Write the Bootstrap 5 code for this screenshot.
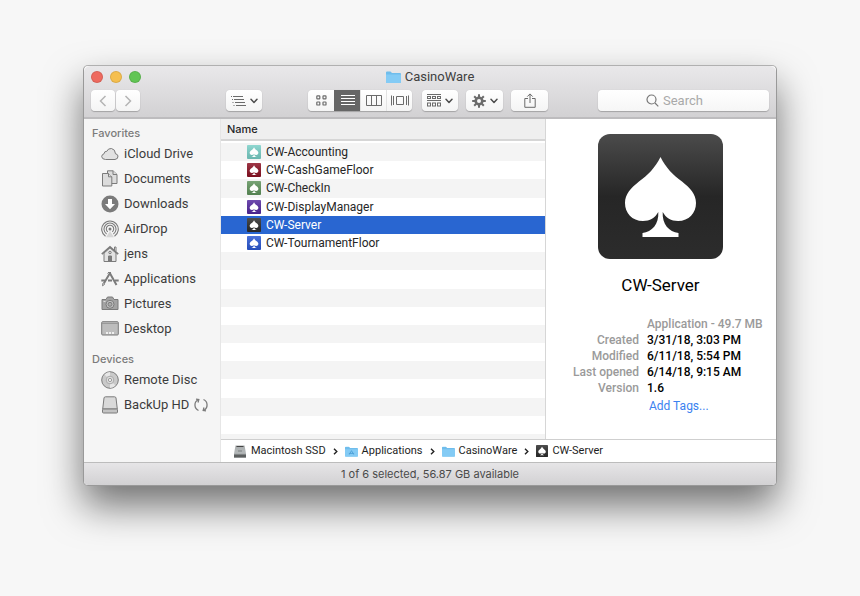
<!DOCTYPE html>
<html lang="en">
<head>
<meta charset="utf-8">
<meta name="viewport" content="width=device-width, initial-scale=1">
<title>CasinoWare</title>
<link href="https://cdn.jsdelivr.net/npm/bootstrap@5.3.0/dist/css/bootstrap.min.css" rel="stylesheet">
<style>
  body { font-family: Roboto, "Liberation Sans", sans-serif; font-size: 13px; line-height: 18px; color: #262626; background: #f7f7f7; padding: 65px 83px; }
  .finder { border: 1px solid #999; border-top-color: #b0b0b0; border-radius: 5px; background: #fff; box-shadow: 0 20px 38px rgba(0,0,0,.54); }
  .chrome { background: linear-gradient(#e9e8ea, #d2d1d3); border-bottom: 2px solid #bdbcbe; height: 53px; }
  .titlebar { height: 22px; color: #404040; padding: 0 7px; }
  .lights { gap: 7px; }
  .light { width: 12px; height: 12px; border-radius: 50%; border: 1px solid rgba(0,0,0,.1); padding: 0; }
  .light-close { background: #ee6a5f; } .light-min { background: #f5bf4f; } .light-zoom { background: #61c554; }
  .side-slot { flex: 1 1 0; }
  .tools { padding: 2px 7px 0 7px; }
  .tool { height: 21px; width: 36px; padding: 0; border: 0; border-radius: 4px; background: linear-gradient(#fff, #f4f4f4); box-shadow: 0 1px 1px rgba(0,0,0,.22), 0 0 1px rgba(0,0,0,.15); color: #6b6b6b; display: flex; align-items: center; justify-content: center; gap: 4px; }
  .tool-nav { width: 24px; color: #b4b4b4; }
  .tool-wide { width: 37px; }
  .navs { gap: 1px; }
  .views { border-radius: 4px; box-shadow: 0 1px 1px rgba(0,0,0,.22), 0 0 1px rgba(0,0,0,.15); margin-left: 46px; margin-right: 10px; }
  .views .tool { width: 26px; box-shadow: none; border-radius: 0; border-left: 1px solid #e3e3e3; }
  .views .tool:first-child { border-radius: 4px 0 0 4px; border-left: 0; }
  .views .tool:last-child { border-radius: 0 4px 4px 0; }
  .views .tool.on { background: #666; color: #fff; border-color: #666; }
  .list-menu { margin-left: 86px; }
  .find { height: 21px; width: 171px; padding-right: 14px; border-radius: 4px; background: linear-gradient(#fff, #f6f6f6); box-shadow: 0 1px 1px rgba(0,0,0,.22), 0 0 1px rgba(0,0,0,.15); color: #777; }
  .find input { border: 0; background: none; outline: 0; padding: 0; width: 44px; font-size: 13px; color: #333; }
  .find input::placeholder { color: #a9a9a9; opacity: 1; }
  svg { flex: none; display: block; }
  .main { min-height: 343px; }
  .places { width: 137px; flex: none; background: #f5f5f5; border-right: 1px solid #e6e6e6; padding-top: 6px; }
  .places h2, .files thead th, .foot { font-family: Inter, "Liberation Sans", sans-serif; font-size: 11px; }
  .places h2 { line-height: 16px; font-weight: 500; color: #7b7b7b; margin: 0; padding-left: 8px; }
  .places h2.second { margin-top: 10px; }
  .places a { height: 25px; gap: 5px; padding-left: 17px; color: #3c3c3c; text-decoration: none; white-space: nowrap; }
  .places a svg { color: #7b7b7b; }
  .pane { min-width: 0; }
  .files { flex: 1 1 0; min-width: 0; }
  .files table { display: flex; flex-direction: column; flex: 1; font-size: 12px; }
  .files thead th { display: block; height: 22px; line-height: 20px; background: #efefef; border-bottom: 2px solid #d6d6d6; font-weight: 500; padding: 0 6px; color: #262626; margin-bottom: 2px; }
  .files tbody { display: grid; grid-auto-rows: 1fr; flex: 1; }
  .files tr { display: block; }
  .files tbody tr { display: flex; align-items: center; background: #fff; }
  .files tbody tr:nth-child(odd) { background: #f4f4f4; }
  .files tbody tr.picked { background: #2966d1; color: #fff; }
  .files td { display: flex; align-items: center; gap: 5px; padding-left: 26px; height: 18px; }
  .tail { height: 5px; background: #f4f4f4; }
  .preview { width: 231px; flex: none; border-left: 1px solid #d6d6d6; padding-top: 15px; padding-right: 1px; color: #000; }
  .preview h1 { font-size: 17px; line-height: 22px; font-weight: 400; margin: 15px 0 20px; }
  .facts { font-size: 12px; line-height: 16px; display: grid; grid-template-columns: 93px 1fr; column-gap: 8px; margin: 0; width: 100%; white-space: nowrap; }
  .facts dt { text-align: right; font-weight: 500; color: #9a9a9a; }
  .facts dd { margin: 0; font-weight: 500; }
  .facts .kind { grid-column: 2; color: #9a9a9a; }
  .facts .tags { grid-column: 2; padding: 2px 2px 0; }
  .facts .tags a { color: #3b82f0; text-decoration: none; font-weight: 400; }
  .trail { height: 23px; border-top: 1px solid #cfcfcf; font-size: 11px; padding-left: 12px; gap: 7px; color: #1e1e1e; white-space: nowrap; }
  .trail a { color: inherit; text-decoration: none; gap: 4px; }
  .foot { height: 23px; line-height: 22px; border-top: 1px solid #bcbcbc; background: linear-gradient(#e6e5e7, #d2d1d3); border-radius: 0 0 4px 4px; color: #4a4a4a; }
</style>
<script src="https://cdn.jsdelivr.net/npm/bootstrap@5.3.0/dist/js/bootstrap.bundle.min.js"></script>
</head>
<body>
<svg width="0" height="0" class="position-absolute" aria-hidden="true">
  <defs>
    <linearGradient id="gloss" x1="0" y1="0" x2="0" y2="1"><stop offset="0" stop-color="#4b4b4b"/><stop offset=".5" stop-color="#262626"/><stop offset="1" stop-color="#2c2c2c"/></linearGradient>
    <linearGradient id="sheen" x1="0" y1="0" x2="0" y2="1"><stop offset="0" stop-color="#fff" stop-opacity=".16"/><stop offset="1" stop-color="#000" stop-opacity=".12"/></linearGradient>
    <linearGradient id="metal" x1="0" y1="0" x2="0" y2="1"><stop offset="0" stop-color="#a9adae"/><stop offset=".6" stop-color="#b4b8b9"/><stop offset="1" stop-color="#8c9091"/></linearGradient>
    <path id="spade" d="M62.500 23C57 34 50 41 41 47.500C33 54 27 60 27 69C27 79 34 87 45 87C52 87 57 84 60.300 78C61 90 54 98 44.500 99V103H80.500V99C71 98 64 90 64.700 78C68 84 73 87 80 87C91 87 98 79 98 69C98 60 92 54 84 47.500C75 41 68 34 62.500 23Z"/>
    <symbol id="tile" viewBox="0 0 125 125"><rect width="125" height="125" rx="9" fill="currentColor"/><rect width="125" height="125" rx="9" fill="url(#sheen)"/><use href="#spade" fill="#fff" transform="translate(-6 -6) scale(1.100)"/></symbol>
    <symbol id="folder" viewBox="0 0 15 12"><path d="M0 1.500Q0 .5 1 .5H4.500L6 2H14Q15 2 15 3V11Q15 12 14 12H1Q0 12 0 11Z" fill="#6fbdec"/><path d="M0 3.500H15V11Q15 12 14 12H1Q0 12 0 11Z" fill="#84cbf5"/></symbol>
    <symbol id="chev" viewBox="0 0 8 6"><path d="M1 1.200L4 4.400L7 1.200" fill="none" stroke="#4d4d4d" stroke-width="1.500" stroke-linecap="round" stroke-linejoin="round"/></symbol>
    <symbol id="next" viewBox="0 0 5 7"><path d="M1 .8L3.800 3.500L1 6.200" fill="none" stroke="#222" stroke-width="1.400"/></symbol>
  </defs>
</svg>

<main class="finder">
  <header class="chrome rounded-top">
    <div class="titlebar d-flex align-items-center">
      <div class="side-slot lights d-flex">
        <button class="light light-close" aria-label="Close"></button><button class="light light-min" aria-label="Minimize"></button><button class="light light-zoom" aria-label="Zoom"></button>
      </div>
      <div class="d-flex align-items-center gap-1"><svg width="15" height="12"><use href="#folder"/></svg><span>CasinoWare</span></div>
      <div class="side-slot"></div>
    </div>
    <div class="tools d-flex">
      <div class="navs d-flex">
        <button class="tool tool-nav" aria-label="Back"><svg width="8" height="12" fill="none" stroke="currentColor" stroke-width="1.500"><path d="M6.500 1L1.500 6L6.500 11"/></svg></button>
        <button class="tool tool-nav" aria-label="Forward"><svg width="8" height="12" fill="none" stroke="currentColor" stroke-width="1.500"><path d="M1.500 1L6.500 6L1.500 11"/></svg></button>
      </div>
      <button class="tool list-menu" aria-label="List options"><svg width="15" height="10" stroke="currentColor"><path d="M2 .5H12M3 3.500H13M4 6.500H14M5 9.500H15"/><path d="M0 .5H1M1 3.500H2M1.500 6.500H2.500M2.500 9.500H3.500"/></svg><svg width="8" height="6"><use href="#chev"/></svg></button>
      <div class="views d-flex" role="group" aria-label="View">
        <button class="tool" aria-label="Icons"><svg width="11" height="11" fill="none" stroke="currentColor" stroke-width="1.200"><rect x=".8" y=".8" width="3" height="3" rx=".6"/><rect x="7" y=".8" width="3" height="3" rx=".6"/><rect x=".8" y="7" width="3" height="3" rx=".6"/><rect x="7" y="7" width="3" height="3" rx=".6"/></svg></button>
        <button class="tool on" aria-label="List"><svg width="14" height="11" stroke="currentColor"><path d="M0 .5H14M0 3.500H14M0 6.500H14M0 9.500H14" stroke-width="1.100"/></svg></button>
        <button class="tool" aria-label="Columns"><svg width="16" height="11" fill="none" stroke="currentColor"><path d="M.5 .5H15.500V10.500H.5ZM5.500 .5V10.500M10.500 .5V10.500"/></svg></button>
        <button class="tool" aria-label="Gallery"><svg width="18" height="11" fill="none" stroke="currentColor"><path d="M5.500 1.500H12.500V9.500H5.500ZM.5 .5V10.500M2.500 1V10M15.500 1V10M17.500 .5V10.500"/></svg></button>
      </div>
      <button class="tool" aria-label="Arrange"><svg width="14" height="13" fill="none" stroke="currentColor"><path d="M0 .5H14M0 6.500H14" /><rect x=".5" y="2.500" width="3" height="2"/><rect x="5.500" y="2.500" width="3" height="2"/><rect x="10.500" y="2.500" width="3" height="2"/><rect x=".5" y="9" width="3" height="3"/><rect x="5.500" y="9" width="3" height="3"/><rect x="10.500" y="9" width="3" height="3"/></svg><svg width="8" height="6"><use href="#chev"/></svg></button>
      <button class="tool tool-wide ms-2" aria-label="Actions"><svg width="14" height="14" viewBox="-7 -7 14 14"><circle r="3.300" fill="none" stroke="currentColor" stroke-width="2.600"/><g stroke="currentColor" stroke-width="2"><path d="M0 -6.800V-4M0 6.800V4M-6.800 0H-4M6.800 0H4"/><path d="M0 -6.800V-4M0 6.800V4M-6.800 0H-4M6.800 0H4" transform="rotate(45)"/></g></svg><svg width="8" height="6"><use href="#chev"/></svg></button>
      <button class="tool tool-wide ms-2" aria-label="Share"><svg width="12" height="15" fill="none" stroke="currentColor"><path d="M4 5.500H.8V14.300H11.200V5.500H8M6 10V1M3.300 3.600L6 .9L8.700 3.600"/></svg></button>
      <label class="find ms-auto d-flex align-items-center justify-content-center gap-1"><svg width="13" height="13" fill="none" stroke="currentColor" stroke-width="1.200"><circle cx="5.500" cy="5.500" r="4.500"/><path d="M9 9L12.300 12.300"/></svg><input type="text" placeholder="Search" aria-label="Search"></label>
    </div>
  </header>

  <div class="main d-flex">
    <nav class="places">
      <h2>Favorites</h2>
      <a href="#" class="d-flex align-items-center"><svg width="18" height="14"><path d="M4.500 12.500H14Q17.300 12 17 9Q16.500 7 14.500 6.800Q14.300 2.300 10.500 1.500Q7 1.200 5.800 4.300Q3.300 4 3 6.800Q.8 7.300 .7 9.700Q1 12.300 4.500 12.500Z" fill="#e2e2e2" stroke="currentColor"/></svg>iCloud Drive</a>
      <a href="#" class="d-flex align-items-center"><svg width="18" height="17" fill="#dcdcdc" stroke="currentColor"><path d="M6.500 .8H12L16 4.500V13.500H6.500Z"/><path d="M12 .8V4.500H16" /><path d="M1.500 3.500H7.500L10.800 6.800V16H1.500Z"/><path d="M7.500 3.500V6.800H10.800"/></svg>Documents</a>
      <a href="#" class="d-flex align-items-center"><svg width="18" height="18"><circle cx="9" cy="9" r="8.500" fill="currentColor"/><path d="M7 4H11V9H14L9 14.300L4 9H7Z" fill="#fff"/></svg>Downloads</a>
      <a href="#" class="d-flex align-items-center"><svg width="18" height="18" fill="none" stroke="currentColor" stroke-width="1.100"><path d="M4.500 16.200A8.300 8.300 0 1 1 13.500 16.200M5.600 14A6 6 0 1 1 12.400 14M6.800 11.900A3.700 3.700 0 1 1 11.200 11.900"/><circle cx="9" cy="9" r="1.500" fill="currentColor" stroke="none"/><path d="M9 11L5 17.300H13Z" fill="currentColor" stroke="none" opacity=".25"/></svg>AirDrop</a>
      <a href="#" class="d-flex align-items-center"><svg width="18" height="18" fill="none" stroke="currentColor"><path d="M3 8V16.500H15V8L9 2.800Z" fill="#e2e2e2"/><path d="M.8 9.200L9 1.800L17.200 9.200" stroke-width="1.700"/><path d="M13.500 5V2H15V6.500"/><path d="M7.500 16V11H10.500V16Z" fill="currentColor"/><circle cx="9" cy="7.500" r="1.200"/></svg>jens</a>
      <a href="#" class="d-flex align-items-center"><svg width="18" height="18" fill="none" stroke="currentColor"><path d="M2.800 13.500L9.300 2.500M8.500 2.500L15.500 15" stroke-width="2"/><path d="M.3 10.500H4M7 10.500H11M14 10.500H17.700" stroke-width="2.200"/><path d="M2 13L1.500 15.800L3.800 14.200M6.500 3.500L8 2"/></svg>Applications</a>
      <a href="#" class="d-flex align-items-center"><svg width="18" height="15"><path d="M1 3.500H5L6.500 1H11.500L13 3.500H17V13.500H1Z" fill="#a3a3a3" stroke="currentColor"/><circle cx="9" cy="8.300" r="4" fill="#c4c4c4" stroke="currentColor"/><circle cx="9" cy="8.300" r="2" fill="#aaa" stroke="currentColor"/><path d="M2.500 5.500H4.500" stroke="#ddd"/></svg>Pictures</a>
      <a href="#" class="d-flex align-items-center"><svg width="18" height="15"><rect x=".7" y=".7" width="16.600" height="13.300" rx="1" fill="#bdbdbd" stroke="currentColor"/><path d="M1 2.500H17" stroke="#999"/><path d="M5 12H7M8 12H10M11 12H13" stroke="#fff" stroke-width="1.500"/></svg>Desktop</a>
      <h2 class="second">Devices</h2>
      <a href="#" class="d-flex align-items-center"><svg width="18" height="18"><circle cx="9" cy="9" r="8.300" fill="#c9c9c9" stroke="currentColor"/><path d="M9 9L3.500 3.500A8 8 0 0 1 9 1ZM9 9L14.500 14.500A8 8 0 0 1 9 17Z" fill="#e6e6e6"/><circle cx="9" cy="9" r="3.800" fill="#ddd" stroke="#aaa"/><circle cx="9" cy="9" r="1.600" fill="#f5f5f5" stroke="#999"/></svg>Remote Disc</a>
      <a href="#" class="d-flex align-items-center"><svg width="18" height="18" fill="#d9d9d9" stroke="currentColor"><path d="M4.500 .8H13.500Q14.800 .8 15 2L16.300 13H1.700L3 2Q3.200 .8 4.500 .8Z"/><rect x="1.500" y="13" width="15" height="4" rx="1" fill="#c3c3c3"/></svg>BackUp HD<svg width="14" height="16" fill="none" stroke="currentColor" stroke-width="1.300"><path d="M4.500 13.500A6 6 0 0 1 4 2.800M9.500 2.500A6 6 0 0 1 10 13.200"/><path d="M2 2.200L4.800 2.500L4 5.500M12 13.800L9.200 13.500L10 10.500"/></svg></a>
    </nav>

    <div class="pane d-flex flex-column flex-grow-1">
      <div class="d-flex flex-grow-1">
        <section class="files d-flex flex-column">
          <table>
            <thead><tr><th scope="col">Name</th></tr></thead>
            <tbody>
              <tr><td><svg width="14" height="14" color="#7ad0c8"><use href="#tile"/></svg>CW-Accounting</td></tr>
              <tr><td><svg width="14" height="14" color="#8c1224"><use href="#tile"/></svg>CW-CashGameFloor</td></tr>
              <tr><td><svg width="14" height="14" color="#5f935c"><use href="#tile"/></svg>CW-CheckIn</td></tr>
              <tr><td><svg width="14" height="14" color="#5429a0"><use href="#tile"/></svg>CW-DisplayManager</td></tr>
              <tr class="picked"><td><svg width="14" height="14" color="#2c2c2c"><use href="#tile"/></svg>CW-Server</td></tr>
              <tr><td><svg width="14" height="14" color="#2a58d4"><use href="#tile"/></svg>CW-TournamentFloor</td></tr>
              <tr></tr><tr></tr><tr></tr><tr></tr><tr></tr><tr></tr><tr></tr><tr></tr><tr></tr><tr></tr>
            </tbody>
          </table>
          <div class="tail"></div>
        </section>
        <aside class="preview d-flex flex-column align-items-center">
          <svg width="125" height="125"><rect width="125" height="125" rx="12" fill="url(#gloss)"/><use href="#spade" fill="#fff"/></svg>
          <h1>CW-Server</h1>
          <dl class="facts">
            <dd class="kind">Application - 49.7 MB</dd>
            <dt>Created</dt><dd>3/31/18, 3:03 PM</dd>
            <dt>Modified</dt><dd>6/11/18, 5:54 PM</dd>
            <dt>Last opened</dt><dd>6/14/18, 9:15 AM</dd>
            <dt>Version</dt><dd>1.6</dd>
            <dd class="tags"><a href="#">Add Tags...</a></dd>
          </dl>
        </aside>
      </div>
      <nav class="trail d-flex align-items-center" aria-label="Path">
        <a href="#" class="d-flex align-items-center"><svg width="14" height="13"><path d="M2.500 .5H11.500L13 8.500V12.500H1V8.500Z" fill="url(#metal)"/><path d="M3.500 1.500H10.500" stroke="#444"/><path d="M5 6H9" stroke="#7d8182"/><rect x="1" y="9.500" width="12" height="3" fill="#5d6060"/></svg>Macintosh SSD</a>
        <svg width="5" height="7"><use href="#next"/></svg>
        <a href="#" class="d-flex align-items-center"><svg width="13" height="11" viewBox="0 0 15 12"><use href="#folder"/><path d="M5 9.500L7.500 5L10 9.500M4.500 8.200H10.500" fill="none" stroke="#4b9fd6"/></svg>Applications</a>
        <svg width="5" height="7"><use href="#next"/></svg>
        <a href="#" class="d-flex align-items-center"><svg width="13" height="11" viewBox="0 0 15 12"><use href="#folder"/></svg>CasinoWare</a>
        <svg width="5" height="7"><use href="#next"/></svg>
        <a href="#" class="d-flex align-items-center"><svg width="12" height="12" color="#2c2c2c"><use href="#tile"/></svg>CW-Server</a>
      </nav>
    </div>
  </div>
  <footer class="foot text-center">1 of 6 selected, 56.87 GB available</footer>
</main>
</body>
</html>
